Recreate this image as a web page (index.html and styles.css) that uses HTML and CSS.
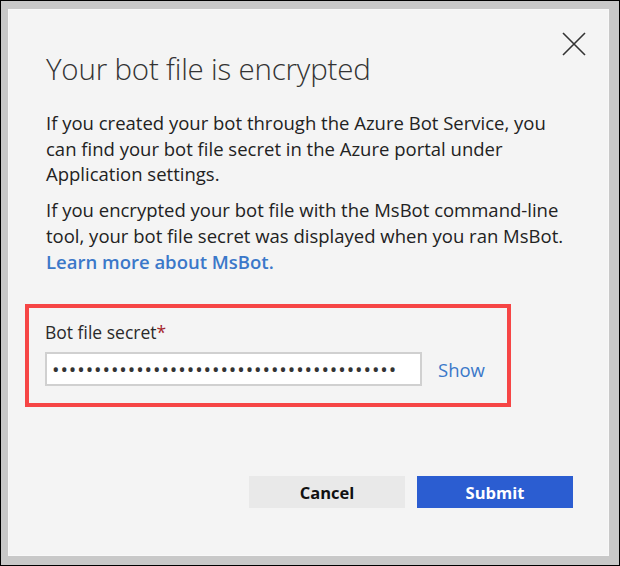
FILE: index.html
```html
<!DOCTYPE html>
<html lang="en">
<head>
<meta charset="utf-8">
<title>Your bot file is encrypted</title>
<link rel="stylesheet" href="styles.css">
</head>
<body>
<div class="frame">
  <div class="dialog">
    <button class="close" aria-label="Close">
      <svg width="24" height="24" viewBox="0 0 24 24"><path d="M1 1 L23 23 M23 1 L1 23" stroke="#333" stroke-width="1.6" fill="none"/></svg>
    </button>
    <h1 class="title">Your bot file is encrypted</h1>
    <p class="para">If you created your bot through the Azure Bot Service, you can find your bot file secret in the Azure portal under Application settings.</p>
    <p class="para">If you encrypted your bot file with the MsBot command-line tool, your bot file secret was displayed when you ran MsBot. <a class="link" href="#">Learn more about MsBot.</a></p>
    <div class="highlight">
      <label class="label" for="secret">Bot file secret<span class="req">*</span></label>
      <div class="field-row">
        <input class="input" id="secret" type="password" readonly value="aaaaaaaaaaaaaaaaaaaaaaaaaaaaaaaaaaaaaaaaa">
        <a class="show" href="#">Show</a>
      </div>
    </div>
    <div class="actions">
      <button class="btn btn-cancel">Cancel</button>
      <button class="btn btn-submit">Submit</button>
    </div>
  </div>
</div>
</body>
</html>
```

FILE: styles.css
```css
html, body {
  margin: 0;
  padding: 0;
  height: 100%;
}
body {
  font-family: "Open Sans", "Noto Sans", sans-serif;
  color: #222;
}
.frame {
  box-sizing: border-box;
  width: 620px;
  height: 566px;
  border: 1px solid #000;
  background: #c8c8c8;
  padding: 8px 10px 9px 7px;
  display: flex;
}
.dialog {
  position: relative;
  flex: 1;
  background: #f4f4f4;
  box-shadow: inset 0 0 0 1px #f8f8f8;
  padding: 42px 36px 0 38px;
  display: flex;
  flex-direction: column;
}
.close {
  position: absolute;
  top: 23px;
  right: 23px;
  width: 24px;
  height: 24px;
  padding: 0;
  border: 0;
  background: none;
  display: flex;
}
.title {
  margin: 0;
  font-weight: 300;
  font-size: 29.5px;
  line-height: 36px;
  color: #333;
  letter-spacing: -0.2px;
}
.para {
  margin: 23px 0 0;
  font-size: 18.5px;
  line-height: 25.7px;
}
.para + .para {
  margin-top: 10px;
}
.link {
  color: #3b78c9;
  font-weight: 600;
  text-decoration: none;
}
.highlight {
  align-self: flex-start;
  margin: 30px 0 0 -21px;
  border: 4px solid #f64545;
  padding: 12px 17px 17px 16px;
  display: flex;
  flex-direction: column;
}
.label {
  font-size: 17.5px;
  line-height: 24px;
  color: #2a2a2a;
}
.req {
  color: #a4262c;
}
.field-row {
  margin-top: 8px;
  display: flex;
  align-items: center;
  gap: 16px;
}
.input {
  box-sizing: border-box;
  width: 377px;
  height: 34px;
  border: 2px solid #d0d0d0;
  background: #fff;
  padding: 0 5px;
  font-family: "Open Sans", sans-serif;
  font-size: 20px;
  letter-spacing: 0.9px;
  color: #333;
  outline: none;
}
.show {
  color: #3b78c9;
  font-size: 18.5px;
  text-decoration: none;
  padding-right: 5px;
}
.actions {
  margin-top: auto;
  margin-bottom: 48px;
  display: flex;
  justify-content: flex-end;
  gap: 12px;
}
.btn {
  width: 156px;
  height: 32px;
  border: 0;
  font-family: "Open Sans", sans-serif;
  font-weight: 700;
  font-size: 16.5px;
}
.btn-cancel {
  background: #e9e9e9;
  color: #111;
}
.btn-submit {
  background: #2b5dd1;
  color: #fff;
}
```
